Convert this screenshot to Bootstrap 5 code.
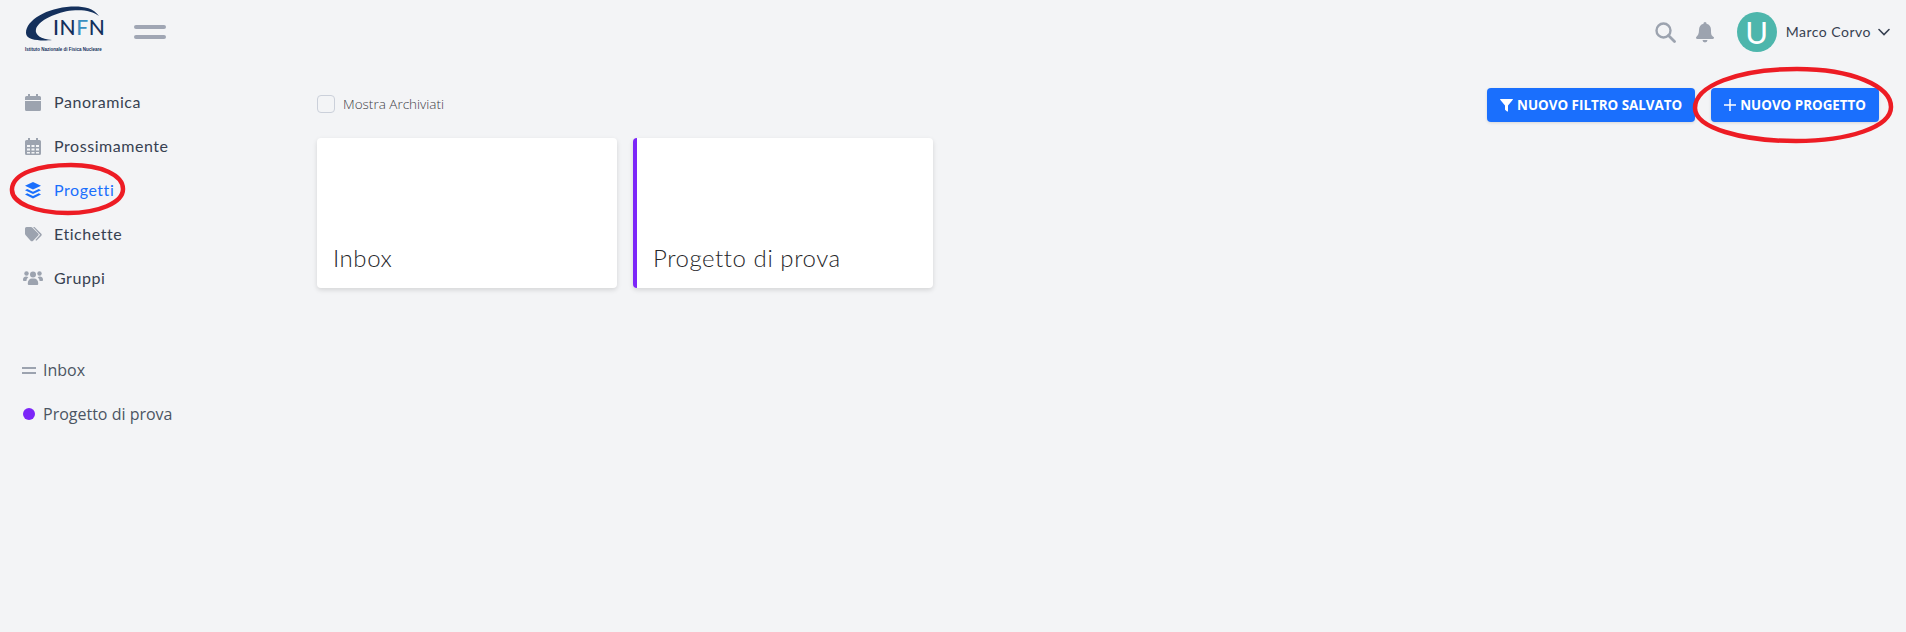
<!doctype html>
<html lang="it"><head><meta charset="utf-8"><title>Progetti</title>
<link href="https://cdn.jsdelivr.net/npm/bootstrap@5.3.0/dist/css/bootstrap.min.css" rel="stylesheet">
<style>
html,body{height:100%}
body{background:#f3f4f6;font-family:"Open Sans","Liberation Sans",sans-serif;color:#374151;position:relative;overflow:hidden}
.topbar{height:64px;padding:0 16px 0 25px}
.logo-box{width:78px;height:56px;position:relative;flex:none;margin-top:-4px}
.logo-word{position:absolute;left:28px;top:13px;font:500 21px/24px "Lato","Liberation Sans",sans-serif;color:#14305c;letter-spacing:.6px}
.logo-word b{font-weight:500;color:#3a8fc0}
.logo-sub{position:absolute;left:0;top:44px;font:700 4.500px/7px "Liberation Sans",sans-serif;color:#14305c;white-space:nowrap}
.logo-arc{position:absolute;left:0;top:0}
.burger{width:32px;margin-left:31px;display:flex;flex-direction:column;gap:6px}
.burger i{display:block;height:4px;border-radius:2px;background:#a0a6b4}
.ico{fill:#9ca3af;display:block;flex:none}
.bell-ico{margin-left:20px}
.avatar{width:40px;height:40px;border-radius:50%;background:#4db6ac;color:#fff;display:flex;align-items:center;justify-content:center;font:400 31px/1 "Lato",sans-serif;margin-left:23px}
.uname{font:400 14px/20px "Lato",sans-serif;color:#374151;letter-spacing:.5px;margin-left:9px}
.chev{margin-left:7px}
.side{width:317px;flex:none;padding-top:16px}
.side-link{height:44px;display:flex;align-items:center;padding-left:25px;font:400 16px/24px "Lato",sans-serif;color:#374151;letter-spacing:.55px;text-decoration:none}
.side-link .slot{width:29px;flex:none}
.side-link.is-on{color:#1a6ffd}
.side-link.is-on .ico{fill:#1a6ffd}
.side-link.wide-slot{padding-left:23px}
.side-link.wide-slot .slot{width:31px}
.sub-list{margin-top:48px}
.sub-link{height:44px;display:flex;align-items:center;padding-left:22px;font-size:16px;color:#4b5563;text-decoration:none}
.sub-link .slot{width:21px;flex:none}
.dash{display:flex;flex-direction:column;gap:3px;width:14px}
.dash i{height:2px;background:#9ca3af;display:block}
.dot{width:12px;height:12px;border-radius:50%;background:#7c26f8;display:block;margin-left:1px}
.main-pane{flex:1;padding:24px 27px 0 0}
.tools{height:34px}
.check-box{width:18px;height:18px;border:1px solid #cbd0da;border-radius:4px;background:#f3f4f6;flex:none;margin-top:-2px}
.check-txt{font:300 13.500px/20px "Open Sans",sans-serif;color:#3f3f46;margin-left:8px;margin-top:-2px}
.act-btn{height:34px;background:#1a6ffd;border:0;border-radius:4px;color:#fff;font:700 13.400px/34px "Open Sans",sans-serif;padding:0 13px;box-shadow:0 1px 3px rgba(0,0,0,.12);display:flex;align-items:center;white-space:nowrap}
.proj-grid{display:flex;gap:16px;margin-top:16px}
.proj-card{width:300px;height:150px;border:0;border-radius:4px;background:#fff;box-shadow:0 2px 5px rgba(0,0,0,.13);display:flex;flex-direction:column;justify-content:flex-end;padding:0 16px 14px;overflow:hidden}
.proj-card.tinted{border-left:4px solid #7c26f8;padding-left:16px}
.proj-name{font:300 24px/32px "Lato",sans-serif;color:#27272a;letter-spacing:.55px}
.ring{position:absolute;pointer-events:none;fill:none;stroke:#ed1c24;stroke-width:4.500}
.ring-a{left:9px;top:162px}
.ring-b{left:1692px;top:66px}
</style></head><body>
<header class="topbar d-flex align-items-center">
  <div class="logo-box">
    <svg class="logo-arc" width="78" height="46" viewBox="0 0 78 46"><path fill="#14305c" d="M1 31C1 18 22 6 46 4.500 56 4 68 5 74 14 68 9 58 7.500 47 8.500 32 10 14 18 11 27 9.500 33 16 37 27 38 18 39 1 39 1 31Z"/></svg>
    <div class="logo-word">IN<b>F</b>N</div>
    <div class="logo-sub">Istituto Nazionale di Fisica Nucleare</div>
  </div>
  <div class="burger"><i></i><i></i></div>
  <div class="ms-auto d-flex align-items-center">
    <svg class="ico" width="21" height="21" viewBox="0 0 21 21"><circle cx="8.500" cy="8.500" r="7" fill="none" stroke="#9ca3af" stroke-width="2.400"/><path d="M13.500 13.500 19.500 19.500" stroke="#9ca3af" stroke-width="2.800" stroke-linecap="round"/></svg>
    <svg class="ico bell-ico" width="18" height="21" viewBox="0 0 18 21"><path d="M9 0C8 0 7.500.8 7.500 1.800 4.500 2.500 3 5 3 8 3 12 1.800 13.500.3 15c-.6.700-.2 2 .8 2h15.800c1 0 1.400-1.300.8-2C15.200 13.500 15 12 15 8c0-3-1.500-5.500-4.500-6.200C10.500.8 10 0 9 0ZM6.500 18a2.500 2.500 0 0 0 5 0Z"/></svg>
    <div class="avatar">U</div>
    <span class="uname">Marco Corvo</span>
    <svg class="chev" width="12" height="8" viewBox="0 0 12 8"><path d="M1 1.500 6 6.500 11 1.500" fill="none" stroke="#374151" stroke-width="1.600" stroke-linecap="round"/></svg>
  </div>
</header>
<div class="d-flex">
  <nav class="side">
    <a class="side-link" href="#"><span class="slot"><svg class="ico" width="16" height="17" viewBox="0 0 16 17"><path d="M3 0h2v2h6V0h2v2h1.500A1.500 1.500 0 0 1 16 3.500V6H0V3.500A1.500 1.500 0 0 1 1.500 2H3ZM0 7h16v8.500a1.500 1.500 0 0 1-1.500 1.500h-13A1.500 1.500 0 0 1 0 15.500Z"/></svg></span>Panoramica</a>
    <a class="side-link" href="#"><span class="slot"><svg class="ico" width="16" height="17" viewBox="0 0 16 17"><path fill-rule="evenodd" d="M3 0h2v2h6V0h2v2h1.500A1.500 1.500 0 0 1 16 3.500v12a1.500 1.500 0 0 1-1.500 1.500h-13A1.500 1.500 0 0 1 0 15.500v-12A1.500 1.500 0 0 1 1.500 2H3ZM2 7v2h3V7Zm4.500 0v2h3V7ZM11 7v2h3V7ZM2 10.500v2h3v-2Zm4.500 0v2h3v-2Zm4.500 0v2h3v-2ZM2 14v1.500h3V14Zm4.500 0v1.500h3V14Zm4.500 0v1.500h3V14Z"/></svg></span>Prossimamente</a>
    <a class="side-link is-on" href="#"><span class="slot"><svg class="ico" width="16" height="17" viewBox="0 0 16 17"><path d="M8 0 16 3.800 8 7.600 0 3.800ZM2.200 7 8 9.800 13.800 7 16 8.300 8 12.100 0 8.300ZM2.200 11.300 8 14.100 13.800 11.300 16 12.600 8 16.500 0 12.600Z"/></svg></span>Progetti</a>
    <a class="side-link" href="#"><span class="slot"><svg class="ico" width="17" height="15" viewBox="0 0 17 15"><path d="M0 1.500A1.500 1.500 0 0 1 1.500 0H6c.5 0 .9.200 1.200.5l6 6c.6.600.6 1.500 0 2.100l-5.300 5.300c-.6.600-1.500.6-2.100 0l-5.300-6C.2 7.500 0 7 0 6.500ZM9.500 0l6.800 6.700c.6.600.6 1.500 0 2.100l-5 5-.9-.8 4.700-5.200L8 0Z"/></svg></span>Etichette</a>
    <a class="side-link wide-slot" href="#"><span class="slot"><svg class="ico" width="20" height="14" viewBox="0 0 20 14"><circle cx="3.500" cy="2.500" r="2.200"/><circle cx="16.500" cy="2.500" r="2.200"/><circle cx="10" cy="3.500" r="3"/><path d="M0 8.500C0 6.500 1.500 5.500 3 5.500c1 0 1.700.3 2.300.8C4.200 7.200 3.500 8.500 3.400 10H1C.4 10 0 9.500 0 9ZM20 8.500c0-2-1.500-3-3-3-1 0-1.700.3-2.300.8 1.100.9 1.800 2.200 1.900 3.700H19c.6 0 1-.5 1-1ZM4.800 12c0-2.600 2-4.500 4-4.500h2.400c2 0 4 1.900 4 4.500v1a1 1 0 0 1-1 1H5.800a1 1 0 0 1-1-1Z"/></svg></span>Gruppi</a>
    <div class="sub-list">
      <a class="sub-link" href="#"><span class="slot"><span class="dash"><i></i><i></i></span></span>Inbox</a>
      <a class="sub-link" href="#"><span class="slot"><span class="dot"></span></span>Progetto di prova</a>
    </div>
  </nav>
  <main class="main-pane">
    <div class="tools d-flex align-items-center">
      <span class="check-box"></span><span class="check-txt">Mostra Archiviati</span>
      <div class="ms-auto d-flex gap-3">
        <button class="act-btn" type="button"><svg class="me-1" width="13" height="13" viewBox="0 0 13 13"><path fill="#fff" d="M.5 0h12c.4 0 .6.500.3.800L8 6.500V12c0 .5-.5.700-.9.400L5.300 11c-.2-.1-.3-.3-.3-.5V6.500L.2.800C-.1.500.100 0 .5 0Z"/></svg>NUOVO FILTRO SALVATO</button>
        <button class="act-btn" type="button"><svg class="me-1" width="12" height="12" viewBox="0 0 12 12"><path d="M6 0v12M0 6h12" stroke="#fff" stroke-width="1.500"/></svg>NUOVO PROGETTO</button>
      </div>
    </div>
    <div class="proj-grid">
      <div class="card proj-card"><div class="proj-name">Inbox</div></div>
      <div class="card proj-card tinted"><div class="proj-name">Progetto di prova</div></div>
    </div>
  </main>
</div>
<svg class="ring ring-a" width="117" height="54" viewBox="0 0 117 54"><path d="M3 27C4 11 30 3 62 3c30 0 52 10 52 24 0 14-25 24-55 24C27 51 2 41 3 27Z"/></svg>
<svg class="ring ring-b" width="202" height="78" viewBox="0 0 202 78"><path d="M3 42C3 20 45 3 105 3c55 0 94 17 94 38 0 20-42 34-95 34C50 75 3 62 3 42Z"/></svg>
<script src="https://cdn.jsdelivr.net/npm/bootstrap@5.3.0/dist/js/bootstrap.bundle.min.js"></script>
</body></html>
